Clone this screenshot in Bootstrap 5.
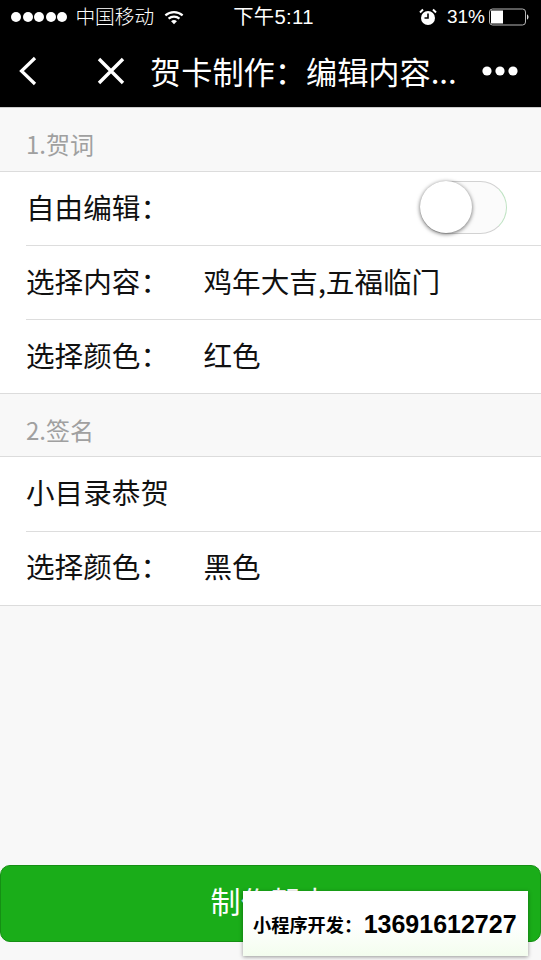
<!DOCTYPE html>
<html lang="zh"><head><meta charset="utf-8"><title>贺卡制作</title>
<link href="https://cdn.jsdelivr.net/npm/bootstrap@5.3.0/dist/css/bootstrap.min.css" rel="stylesheet">
<style>
html,body{height:960px;overflow:hidden}
body{width:541px;background:#f8f8f8;font-family:"Noto Sans CJK SC","Liberation Sans",sans-serif;color:#111}
.topbar{background:#000;color:#fff;height:108px;border-bottom:1px solid #ccc}
.statusline{height:34px;padding:0 12px 0 11px;font-size:19px;line-height:34px;font-family:"Liberation Sans","Noto Sans CJK SC",sans-serif}
.sig{width:10px;height:10px;border-radius:50%;background:#fff;display:block}
.sigs{gap:1.6px;margin-right:8px}
.carrier{margin-right:10px;font-size:19.7px;font-weight:300}
.timecol{flex:1 1 0;margin-left:49px;font-size:20.3px;letter-spacing:.35px}
.alarmico{margin-right:10px}
.navline{height:73px}
.ttl{font-size:31.2px;line-height:1;margin-left:25px;font-weight:400;white-space:nowrap}
.sechead{height:63px;padding:24px 0 0 26px;font-size:24px;line-height:24px;color:#a0a0a0}
.sechead.sec-two{height:62px}
.groupwrap{background:#fff;border-top:1px solid #dcdcdc;border-bottom:1px solid #dcdcdc}
.rowline{height:74px;margin-left:26px;padding-bottom:3px;font-size:28.6px;line-height:1;border-top:1px solid #ddd}
.rowline:first-child{height:73px;border-top:0}
.grp-two .rowline:first-child{height:74px}
.grp-two .rowline:last-child{height:73.5px}
.lbl{width:177.500px}
.togg{width:87px;height:53px;border:1.5px solid #d2d2d2;border-right-color:#bfe3c3;border-radius:27px;background:#fbfbfb;margin:1px 34px 0 auto;position:relative}
.togg::before{content:"";position:absolute;left:-1px;top:-1px;width:52px;height:52px;border-radius:50%;background:#fff;box-shadow:0 1px 4px rgba(0,0,0,.6)}
.makebtn{position:absolute;left:0;top:865px;width:541px;height:77px;background:#1aad19;border:1px solid #158f14;border-radius:10px;color:#fff;font-size:30px;line-height:1;padding:0 0 7px}
.promo{position:absolute;left:243px;top:891px;width:285px;height:65px;background:linear-gradient(#fff 50%,#f3fdee);box-shadow:0 1px 4px rgba(0,0,0,.4);color:#000;font-weight:700;white-space:nowrap;padding:3px 0 0 10px}
.promo .a{font-size:18.200px}
.promo .b{font-size:25px;font-family:"Liberation Sans",sans-serif;margin-left:1.500px}
</style></head>
<body class="position-relative">
<div class="topbar">
  <div class="statusline d-flex align-items-center">
    <span class="d-flex sigs"><i class="sig"></i><i class="sig"></i><i class="sig"></i><i class="sig"></i><i class="sig"></i></span>
    <span class="carrier">中国移动</span>
    <svg width="20" height="15" viewBox="0 0 22 16" fill="none" stroke="#fff" stroke-width="2.400"><path d="M1.500 5.600C7 .8 15 .8 20.500 5.600M5 9.200c3.500-3 8.500-3 12 0"/><path d="M11 15.500 7.800 12c2-1.500 4.400-1.500 6.400 0z" fill="#fff" stroke="none"/></svg>
    <span class="timecol">下午5:11</span>
    <svg width="18" height="18" viewBox="0 0 18 18" class="alarmico"><circle cx="9" cy="10" r="7" fill="#fff"/><path d="M9 5.500V10H5.500" fill="none" stroke="#000" stroke-width="1.600"/><path d="M1 4.500 4 1.500M17 4.500 14 1.500" stroke="#fff" stroke-width="2"/></svg>
    <span>31%</span>
    <svg width="40" height="18" viewBox="0 0 40 18" class="ms-1"><rect x=".5" y="1" width="36" height="16" rx="3" fill="none" stroke="#b5b5b5"/><rect x="2" y="2.500" width="12" height="13" fill="#fff"/><path d="M38 6.500c2 .5 2 4.500 0 5z" fill="#ddd"/></svg>
  </div>
  <div class="navline d-flex align-items-center">
    <svg width="20" height="30" viewBox="0 0 20 30" fill="none" stroke="#fff" stroke-width="3.200" style="margin-left:18px"><path d="M17 2 3.500 15 17 28"/></svg>
    <svg width="28" height="28" viewBox="0 0 28 28" fill="none" stroke="#fff" stroke-width="3.400" style="margin-left:59px"><path d="M2 2 26 26M26 2 2 26"/></svg>
    <span class="ttl">贺卡制作：编辑内容...</span>
    <svg width="36" height="10" viewBox="0 0 36 10" fill="#fff" class="ms-auto" style="margin-right:23px"><circle cx="5" cy="5" r="4.600"/><circle cx="18" cy="5" r="4.600"/><circle cx="31" cy="5" r="4.600"/></svg>
  </div>
</div>
<div class="sechead">1.贺词</div>
<div class="groupwrap">
  <div class="rowline d-flex align-items-center"><span class="lbl">自由编辑：</span><span class="togg"></span></div>
  <div class="rowline d-flex align-items-center"><span class="lbl">选择内容：</span><span>鸡年大吉,五福临门</span></div>
  <div class="rowline d-flex align-items-center"><span class="lbl">选择颜色：</span><span>红色</span></div>
</div>
<div class="sechead sec-two">2.签名</div>
<div class="groupwrap grp-two">
  <div class="rowline d-flex align-items-center"><span class="lbl">小目录恭贺</span></div>
  <div class="rowline d-flex align-items-center"><span class="lbl">选择颜色：</span><span>黑色</span></div>
</div>
<button type="button" class="btn makebtn">制作贺卡</button>
<div class="promo d-flex align-items-center"><span class="a">小程序开发：</span><span class="b">13691612727</span></div>
</body></html>
